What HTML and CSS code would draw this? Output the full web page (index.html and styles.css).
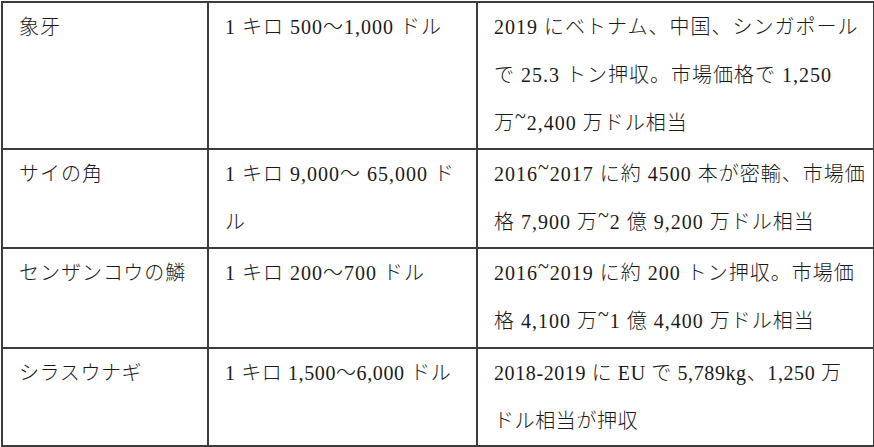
FILE: index.html
```html
<!DOCTYPE html>
<html lang="ja">
<head>
<meta charset="utf-8">
<link rel="stylesheet" href="styles.css">
</head>
<body>
<table class="trade">
  <colgroup>
    <col class="c-name">
    <col class="c-price">
    <col class="c-note">
  </colgroup>
  <tbody>
    <tr class="r1">
      <td>象牙</td>
      <td>1 キロ 500〜1,000 ドル</td>
      <td><span class="ln">2019 にベトナム、中国、シンガポール</span><span class="ln">で 25.3 トン押収。市場価格で 1,250</span><span class="ln">万<span class="tl">~</span>2,400 万ドル相当</span></td>
    </tr>
    <tr class="r2">
      <td>サイの角</td>
      <td><span class="ln">1 キロ 9,000〜 65,000 ド</span><span class="ln">ル</span></td>
      <td><span class="ln">2016<span class="tl">~</span>2017 に約 4500 本が密輸、市場価</span><span class="ln">格 7,900 万<span class="tl">~</span>2 億 9,200 万ドル相当</span></td>
    </tr>
    <tr class="r3">
      <td>センザンコウの鱗</td>
      <td>1 キロ 200〜700 ドル</td>
      <td><span class="ln">2016<span class="tl">~</span>2019 に約 200 トン押収。市場価</span><span class="ln">格 4,100 万<span class="tl">~</span>1 億 4,400 万ドル相当</span></td>
    </tr>
    <tr class="r4">
      <td>シラスウナギ</td>
      <td>1 キロ 1,500〜6,000 ドル</td>
      <td><span class="ln">2018-2019 に EU で 5,789kg、1,250 万</span><span class="ln">ドル相当が押収</span></td>
    </tr>
  </tbody>
</table>
</body>
</html>
```

FILE: styles.css
```css
html, body {
  margin: 0;
  padding: 0;
  background: #ffffff;
}

body {
  padding: 1px 0 0 1px;
}

.trade {
  border-collapse: collapse;
  table-layout: fixed;
  width: 872px;
  font-family: "Liberation Serif", "Noto Sans CJK JP", serif;
  font-size: 20px;
  font-weight: 300;
  color: #1a1a1a;
  letter-spacing: 1px;
}

.c-name { width: 206px; }
.c-price { width: 269px; }
.c-note { width: 397px; }

.trade td {
  border: 2px solid #3c3c3c;
  vertical-align: top;
  padding: 0 8px 0 16px;
  line-height: 48px;
  white-space: nowrap;
  overflow: hidden;
}

.r1 td { height: 145px; }
.r2 td { height: 97px; }
.r3 td { height: 98px; }
.r4 td { height: 95px; letter-spacing: 0.6px; }

.ln {
  display: block;
}

.tl {
  display: inline-block;
  vertical-align: 0.35em;
  line-height: 1;
}
```
